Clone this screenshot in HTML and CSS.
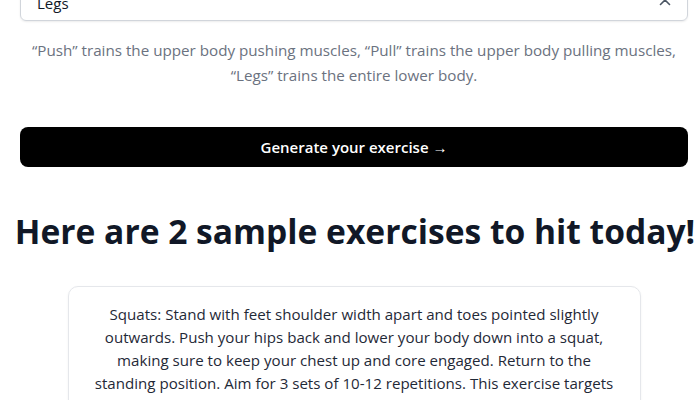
FILE: index.html
```html
<!DOCTYPE html>
<html lang="en">
<head>
<meta charset="utf-8">
<title>Workout generator</title>
<link rel="stylesheet" href="styles.css">
</head>
<body>
<main class="page">
  <div class="select">
    <span class="select-value">Legs</span>
    <svg class="chevron" width="12" height="8" viewBox="0 0 12 8" aria-hidden="true"><path d="M1.5 6.5 L6 2 L10.5 6.5" fill="none" stroke="#4b5563" stroke-width="1.6" stroke-linecap="round" stroke-linejoin="round"/></svg>
  </div>
  <p class="hint">“Push” trains the upper body pushing muscles, “Pull” trains the upper body pulling muscles, “Legs” trains the entire lower body.</p>
  <button class="generate" type="button">Generate your exercise →</button>
  <h1 class="title">Here are 2 sample exercises to hit today!</h1>
  <section class="cards">
    <article class="card">
      <p>Squats: Stand with feet shoulder width apart and toes pointed slightly outwards. Push your hips back and lower your body down into a squat, making sure to keep your chest up and core engaged. Return to the standing position. Aim for 3 sets of 10-12 repetitions. This exercise targets the quadriceps, hamstrings and glutes.</p>
    </article>
  </section>
</main>
</body>
</html>
```
FILE: styles.css
```css
html, body {
  margin: 0;
  padding: 0;
  background: #ffffff;
}
body {
  font-family: "Open Sans", "Noto Sans", sans-serif;
  color: #111827;
}
.page {
  padding: 0 12px 0 20px;
  display: flex;
  flex-direction: column;
  align-items: stretch;
}
.select {
  margin-top: -19px;
  height: 38px;
  border: 1px solid #d1d5db;
  border-radius: 6px;
  box-shadow: 0 1px 2px rgba(0,0,0,0.08);
  display: flex;
  align-items: center;
  justify-content: space-between;
  padding: 0 16px 0 16px;
  font-size: 15px;
  color: #111827;
}
.select-value {
  position: relative;
  top: 2px;
}
.chevron {
  display: block;
  margin-top: 2px;
}
.hint {
  margin: 17px 0 0;
  padding: 0 12px;
  text-align: center;
  font-size: 15.2px;
  line-height: 25px;
  color: #6b7280;
}
.generate {
  margin-top: 39px;
  height: 40px;
  border: 0;
  border-radius: 8px;
  background: #000000;
  color: #ffffff;
  font-family: inherit;
  font-size: 15px;
  font-weight: 600;
}
.title {
  margin: 44px -12px 0 -10px;
  text-align: center;
  font-size: 33.6px;
  line-height: 40px;
  font-weight: 700;
  color: #111827;
  white-space: nowrap;
}
.cards {
  margin-top: 35px;
  display: flex;
  justify-content: center;
}
.card {
  box-sizing: border-box;
  width: 573px;
  padding: 16px 22px;
  border: 1px solid #e5e7eb;
  border-radius: 10px;
  box-shadow: 0 1px 3px rgba(0,0,0,0.05);
}
.card p {
  margin: 0;
  text-align: center;
  font-size: 15.1px;
  line-height: 23px;
  color: #1f2937;
}
```
